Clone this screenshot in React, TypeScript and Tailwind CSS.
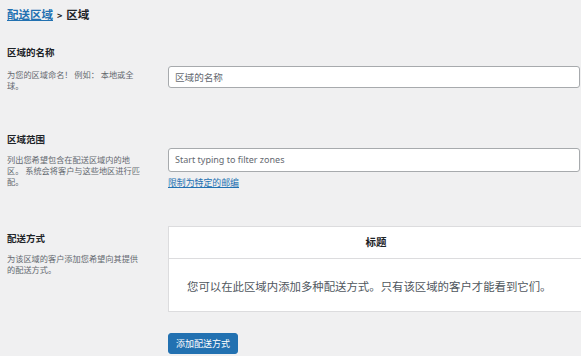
const cjk = { fontFamily: '"Noto Sans CJK SC", "Noto Sans", sans-serif' };
const latin = { fontFamily: '"Noto Sans", "Noto Sans CJK SC", sans-serif' };

const Label = ({ title, desc, descMt }: { title: string; desc: string; descMt: string }) => (
  <div className="w-[161px] shrink-0">
    <h2 className="text-[9.5px] font-bold leading-[14px] text-[#1d2327]">{title}</h2>
    <p className={`w-[133px] text-[8.2px] leading-[11px] text-[#646970] ${descMt}`}>{desc}</p>
  </div>
);

export default function App() {
  return (
    <div className="h-[356px] w-full overflow-hidden bg-[#f0f0f1] pl-[7px] pt-[7px]" style={cjk}>
      <h1 className="h-[14px] text-[11.5px] font-bold leading-[14px] text-[#1d2327]">
        <a href="#" className="text-[#2271b1] underline">
          配送区域
        </a>
        <span className="mx-[4px] text-[9px]">&gt;</span>
        区域
      </h1>

      {/* zone name */}
      <div className="mt-[24px] flex items-start">
        <Label title="区域的名称" desc="为您的区域命名！ 例如： 本地或全球。" descMt="mt-[10px]" />
        <div className="mt-[17px] w-[412px]">
          <input
            placeholder="区域的名称"
            className="h-[22px] w-full rounded-[3px] border border-[#a7aaad] bg-white px-[6px] text-[9.6px] text-[#1d2327] placeholder:text-[#646970]"
          />
        </div>
      </div>

      {/* zone regions */}
      <div className="mt-[41px] flex items-start">
        <Label
          title="区域范围"
          desc="列出您希望包含在配送区域内的地区。 系统会将客户与这些地区进行匹配。"
          descMt="mt-[8px]"
        />
        <div className="mt-[12px] w-[412px]">
          <input
            placeholder="Start typing to filter zones"
            style={latin}
            className="h-[24px] w-full rounded-[3px] border border-[#a7aaad] bg-white px-[6px] text-[9px] text-[#1d2327] placeholder:text-[#646970]"
          />
          <a href="#" className="mt-[5px] block text-[8.9px] leading-[12px] text-[#2271b1] underline">
            限制为特定的邮编
          </a>
        </div>
      </div>

      {/* shipping methods */}
      <div className="mt-[37px] flex items-start">
        <div className="pt-[5px]">
          <Label title="配送方式" desc="为该区域的客户添加您希望向其提供的配送方式。" descMt="mt-[8px]" />
        </div>
        <div className="w-[416px] shrink-0">
          <div className="border border-[#dcdcde] bg-white">
            <div className="flex h-[32px] items-center justify-center border-b border-[#dcdcde] text-[10.5px] font-bold text-[#1d2327]">
              标题
            </div>
            <div className="flex h-[52px] items-center pl-[18px] pt-[5px] text-[11.4px] text-[#50575e]">
              您可以在此区域内添加多种配送方式。只有该区域的客户才能看到它们。
            </div>
          </div>
          <button className="mt-[21px] h-[21px] rounded-[3px] border border-[#2271b1] bg-[#2271b1] px-[7px] text-[9px] leading-[19px] text-white">
            添加配送方式
          </button>
        </div>
      </div>
    </div>
  );
}
